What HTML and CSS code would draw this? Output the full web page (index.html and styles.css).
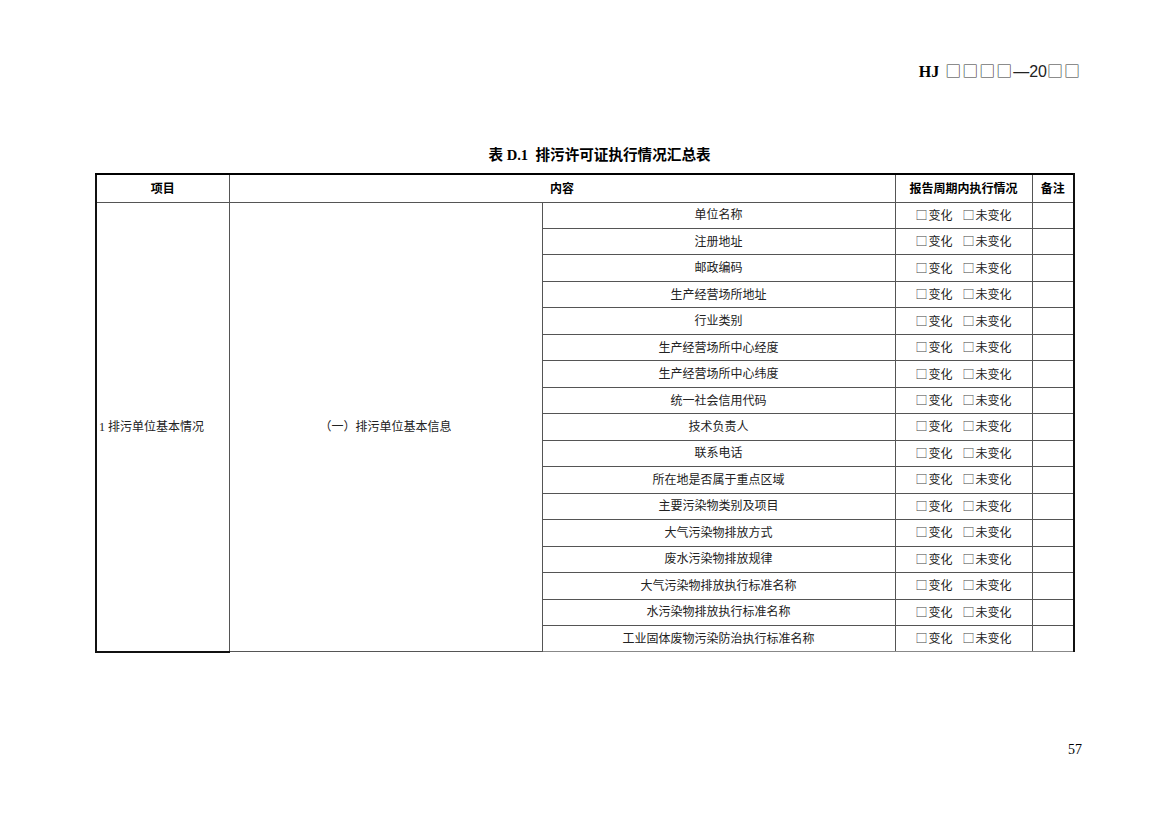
FILE: index.html
```html
<!DOCTYPE html>
<html lang="zh">
<head>
<meta charset="utf-8">
<link rel="stylesheet" href="styles.css">
</head>
<body>
<div class="page">
  <div class="doc-code"><span class="hj">HJ</span> <span class="boxes">□□□□</span><span class="year">—20</span><span class="boxes">□□</span></div>
  <div class="caption">表 D.1&nbsp; 排污许可证执行情况汇总表</div>
  <table class="summary">
    <colgroup>
      <col class="c1"><col class="c2"><col class="c3"><col class="c4"><col class="c5">
    </colgroup>
    <thead>
      <tr class="head">
        <th class="first">项目</th>
        <th colspan="2">内容</th>
        <th>报告周期内执行情况</th>
        <th class="last">备注</th>
      </tr>
    </thead>
    <tbody>
      <tr><td class="first item" rowspan="17">1 排污单位基本情况</td><td class="sub" rowspan="17">（一）排污单位基本信息</td><td>单位名称</td><td class="chk"><span class="bx">□</span>变化<span class="gap"></span><span class="bx">□</span>未变化</td><td class="last"></td></tr>
      <tr><td>注册地址</td><td class="chk"><span class="bx">□</span>变化<span class="gap"></span><span class="bx">□</span>未变化</td><td class="last"></td></tr>
      <tr><td>邮政编码</td><td class="chk"><span class="bx">□</span>变化<span class="gap"></span><span class="bx">□</span>未变化</td><td class="last"></td></tr>
      <tr><td>生产经营场所地址</td><td class="chk"><span class="bx">□</span>变化<span class="gap"></span><span class="bx">□</span>未变化</td><td class="last"></td></tr>
      <tr><td>行业类别</td><td class="chk"><span class="bx">□</span>变化<span class="gap"></span><span class="bx">□</span>未变化</td><td class="last"></td></tr>
      <tr><td>生产经营场所中心经度</td><td class="chk"><span class="bx">□</span>变化<span class="gap"></span><span class="bx">□</span>未变化</td><td class="last"></td></tr>
      <tr><td>生产经营场所中心纬度</td><td class="chk"><span class="bx">□</span>变化<span class="gap"></span><span class="bx">□</span>未变化</td><td class="last"></td></tr>
      <tr><td>统一社会信用代码</td><td class="chk"><span class="bx">□</span>变化<span class="gap"></span><span class="bx">□</span>未变化</td><td class="last"></td></tr>
      <tr><td>技术负责人</td><td class="chk"><span class="bx">□</span>变化<span class="gap"></span><span class="bx">□</span>未变化</td><td class="last"></td></tr>
      <tr><td>联系电话</td><td class="chk"><span class="bx">□</span>变化<span class="gap"></span><span class="bx">□</span>未变化</td><td class="last"></td></tr>
      <tr><td>所在地是否属于重点区域</td><td class="chk"><span class="bx">□</span>变化<span class="gap"></span><span class="bx">□</span>未变化</td><td class="last"></td></tr>
      <tr><td>主要污染物类别及项目</td><td class="chk"><span class="bx">□</span>变化<span class="gap"></span><span class="bx">□</span>未变化</td><td class="last"></td></tr>
      <tr><td>大气污染物排放方式</td><td class="chk"><span class="bx">□</span>变化<span class="gap"></span><span class="bx">□</span>未变化</td><td class="last"></td></tr>
      <tr><td>废水污染物排放规律</td><td class="chk"><span class="bx">□</span>变化<span class="gap"></span><span class="bx">□</span>未变化</td><td class="last"></td></tr>
      <tr><td>大气污染物排放执行标准名称</td><td class="chk"><span class="bx">□</span>变化<span class="gap"></span><span class="bx">□</span>未变化</td><td class="last"></td></tr>
      <tr><td>水污染物排放执行标准名称</td><td class="chk"><span class="bx">□</span>变化<span class="gap"></span><span class="bx">□</span>未变化</td><td class="last"></td></tr>
      <tr><td>工业固体废物污染防治执行标准名称</td><td class="chk"><span class="bx">□</span>变化<span class="gap"></span><span class="bx">□</span>未变化</td><td class="last"></td></tr>
    </tbody>
  </table>
  <div class="page-num">57</div>
</div>
</body>
</html>
```

FILE: styles.css
```css
html, body {
  margin: 0;
  padding: 0;
  background: #ffffff;
}
body {
  font-family: "Liberation Serif", "Noto Sans CJK SC", serif;
  color: #000;
}
.page {
  width: 1169px;
  height: 826px;
  box-sizing: border-box;
  padding-top: 60px;
  position: relative;
}
.doc-code {
  text-align: right;
  padding-right: 88px;
  font-size: 16px;
  line-height: 20px;
  height: 20px;
  white-space: nowrap;
}
.doc-code .hj {
  font-weight: bold;
  margin-right: 2px;
}
.doc-code .boxes {
  font-family: "Noto Sans CJK SC", sans-serif;
  font-weight: normal;
  color: #333;
  font-size: 16px;
  letter-spacing: 1px;
}
.doc-code .year {
  font-family: "Liberation Sans", sans-serif;
  font-size: 16px;
  color: #222;
}
.caption {
  margin-top: 66px;
  text-align: center;
  font-size: 14.6px;
  font-weight: bold;
  line-height: 18px;
  height: 18px;
  padding-left: 30px;
}
.summary {
  margin-top: 9px;
  margin-left: 95px;
  width: 978px;
  border-collapse: collapse;
  table-layout: fixed;
  font-size: 12px;
}
.c1 { width: 133px; }
.c2 { width: 313px; }
.c3 { width: 353px; }
.c4 { width: 137px; }
.c5 { width: 42px; }
.summary th,
.summary td {
  border: 1px solid #555;
  padding: 0;
  text-align: center;
  vertical-align: middle;
  line-height: 14px;
  font-weight: normal;
  color: #222;
}
.summary th {
  font-family: "Noto Sans CJK SC", sans-serif;
  font-weight: bold;
  color: #000;
  font-size: 12px;
  border-top: 2px solid #000;
}
.summary tr.head { height: 28px; }
.summary tbody tr { height: 26.47px; }
.summary .first { border-left: 2px solid #111; }
.summary .last { border-right: 2px solid #111; }
.summary td.item {
  text-align: left;
  padding-left: 2px;
}
.summary tbody tr:last-child td { border-bottom-color: #888; }
.summary tbody td.item { border-bottom: 2px solid #111; }
.summary td.chk { white-space: nowrap; }
.summary .bx {
  font-family: "Noto Sans CJK SC", sans-serif;
  font-size: 12px;
  color: #444;
  margin-right: 1px;
}
.summary .gap {
  display: inline-block;
  width: 10px;
}
.page-num {
  position: absolute;
  right: 87px;
  top: 742px;
  font-size: 14px;
}
```
